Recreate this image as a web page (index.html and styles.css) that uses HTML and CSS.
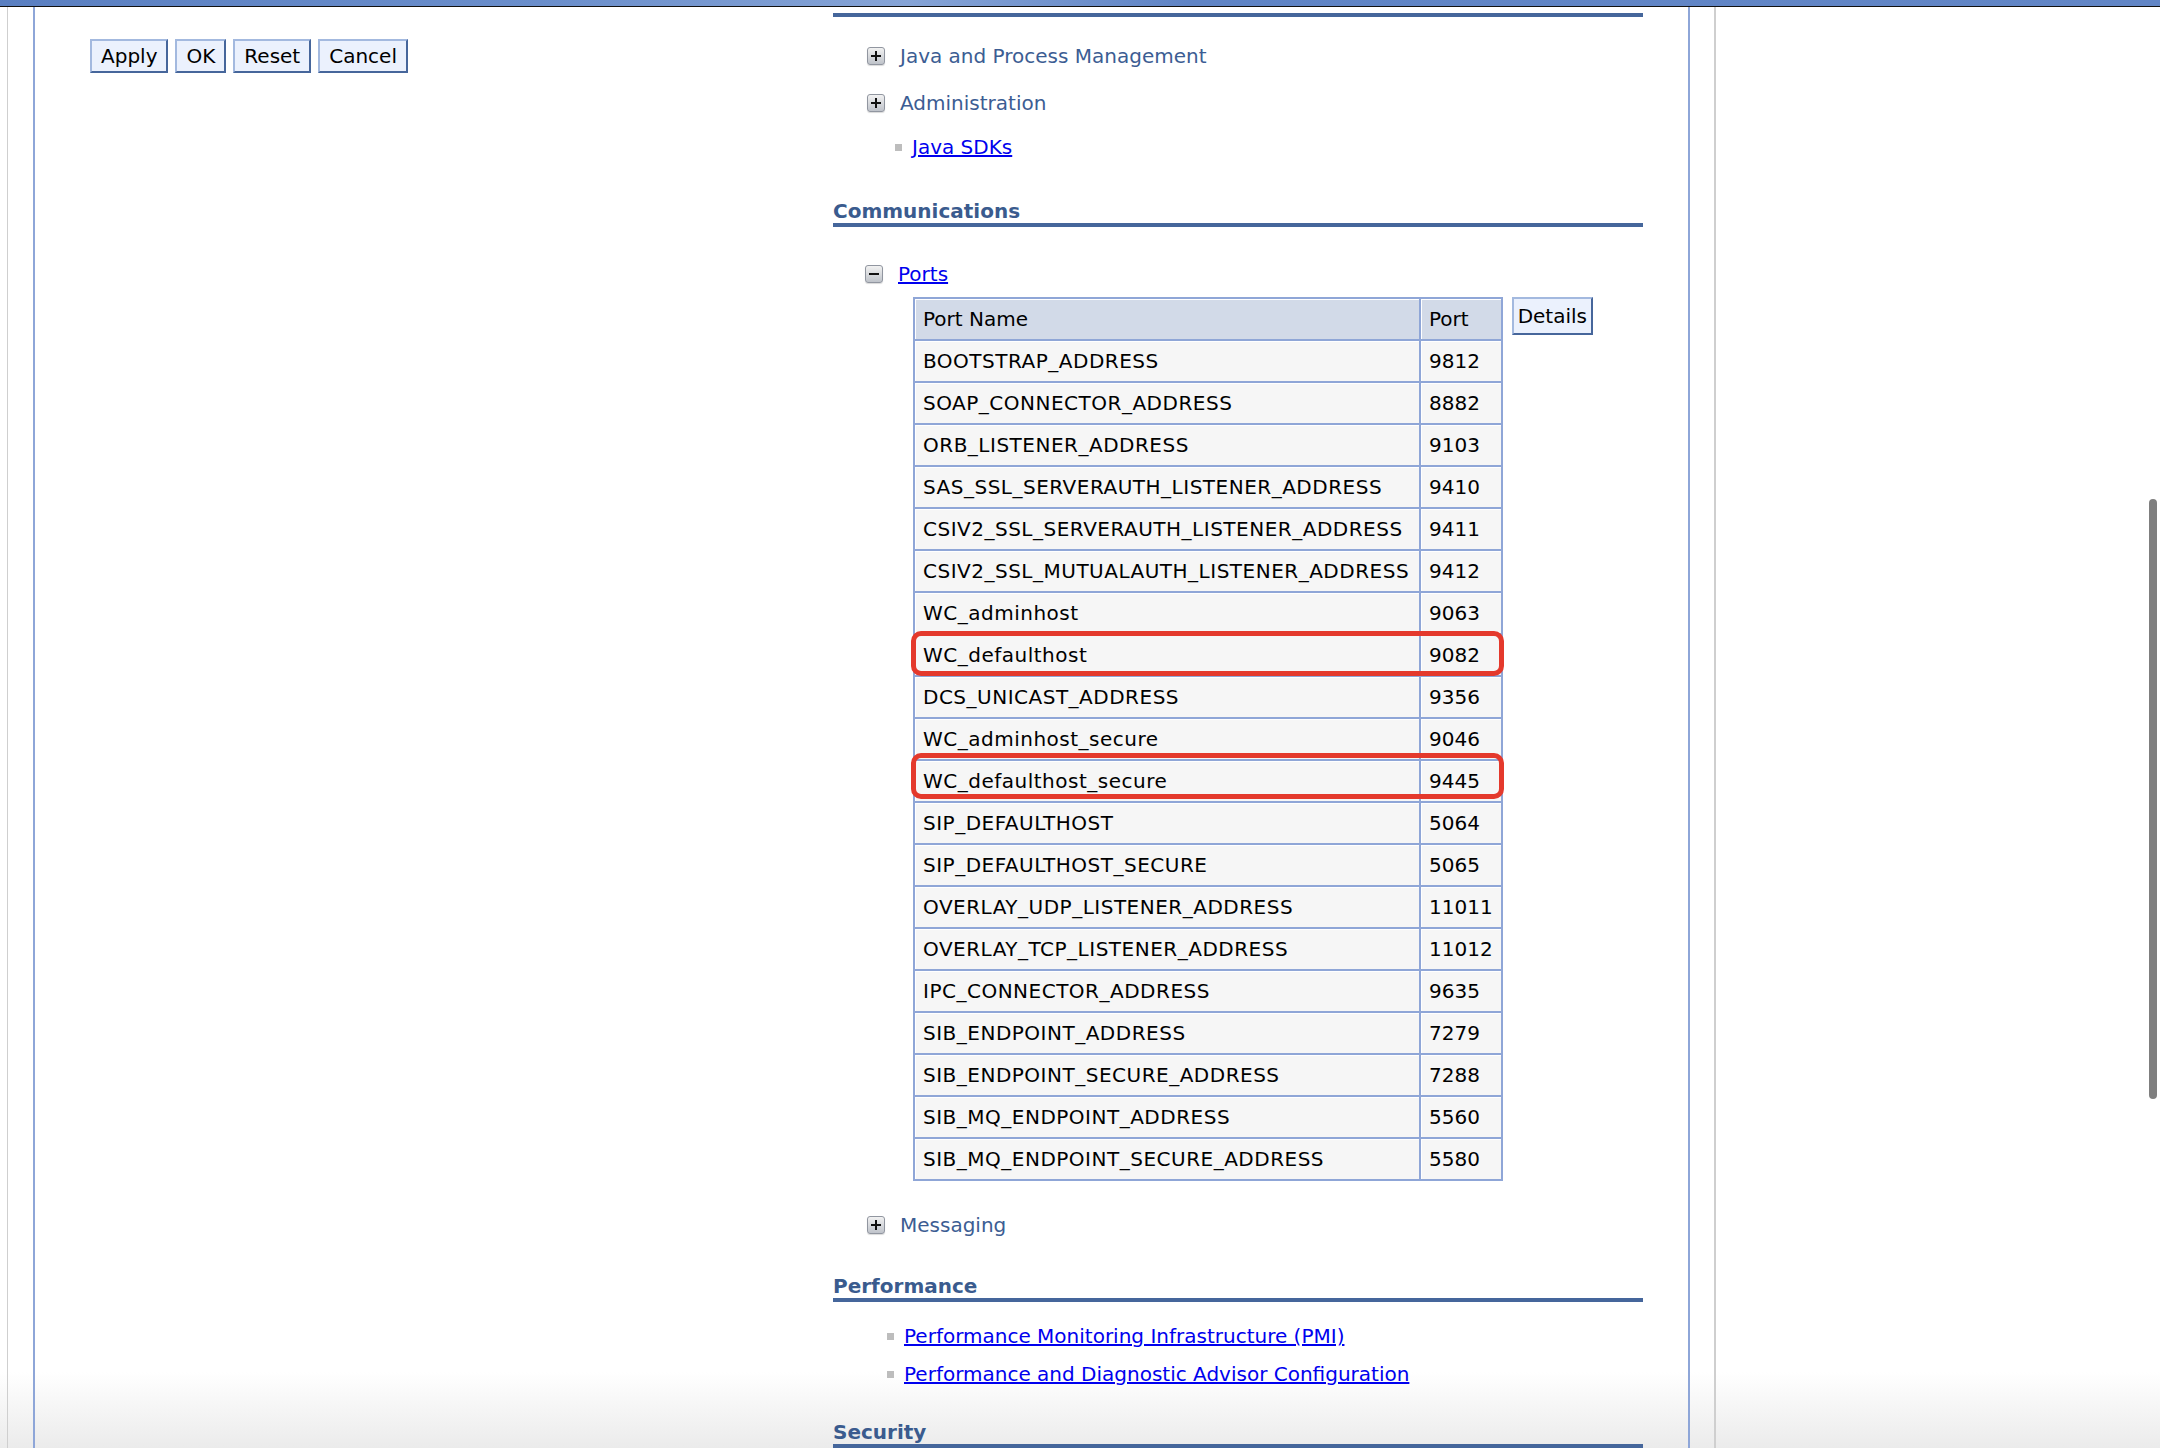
FILE: index.html
```html
<!DOCTYPE html>
<html lang="en">
<head>
<meta charset="utf-8">
<title>Application server ports</title>
<link rel="stylesheet" href="styles.css">
</head>
<body>
<div class="topbar"></div>
<div class="outer">
  <div class="inner">
    <div class="lcol">
      <div class="buttons">
        <button class="btn">Apply</button>
        <button class="btn">OK</button>
        <button class="btn">Reset</button>
        <button class="btn">Cancel</button>
      </div>
    </div>
    <div class="rcol">
      <div class="toprule"></div>

      <div class="tree-item jpm"><span class="tg plus"></span><span class="tree-text">Java and Process Management</span></div>
      <div class="tree-item admin"><span class="tg plus"></span><span class="tree-text">Administration</span></div>
      <div class="sub-item sdk"><span class="bullet"></span><a href="#" class="lnk">Java SDKs</a></div>

      <h2 class="sec-head comm">Communications</h2>

      <div class="tree-item ports"><span class="tg minus"></span><a href="#" class="lnk">Ports</a></div>

      <div class="ports-wrap">
        <table class="ports-table">
          <thead>
            <tr><th class="c-name">Port Name</th><th class="c-port">Port</th></tr>
          </thead>
          <tbody>
            <tr><td>BOOTSTRAP_ADDRESS</td><td>9812</td></tr>
            <tr><td>SOAP_CONNECTOR_ADDRESS</td><td>8882</td></tr>
            <tr><td>ORB_LISTENER_ADDRESS</td><td>9103</td></tr>
            <tr><td>SAS_SSL_SERVERAUTH_LISTENER_ADDRESS</td><td>9410</td></tr>
            <tr><td>CSIV2_SSL_SERVERAUTH_LISTENER_ADDRESS</td><td>9411</td></tr>
            <tr><td>CSIV2_SSL_MUTUALAUTH_LISTENER_ADDRESS</td><td>9412</td></tr>
            <tr><td>WC_adminhost</td><td>9063</td></tr>
            <tr><td>WC_defaulthost</td><td>9082</td></tr>
            <tr><td>DCS_UNICAST_ADDRESS</td><td>9356</td></tr>
            <tr><td>WC_adminhost_secure</td><td>9046</td></tr>
            <tr><td>WC_defaulthost_secure</td><td>9445</td></tr>
            <tr><td>SIP_DEFAULTHOST</td><td>5064</td></tr>
            <tr><td>SIP_DEFAULTHOST_SECURE</td><td>5065</td></tr>
            <tr><td>OVERLAY_UDP_LISTENER_ADDRESS</td><td>11011</td></tr>
            <tr><td>OVERLAY_TCP_LISTENER_ADDRESS</td><td>11012</td></tr>
            <tr><td>IPC_CONNECTOR_ADDRESS</td><td>9635</td></tr>
            <tr><td>SIB_ENDPOINT_ADDRESS</td><td>7279</td></tr>
            <tr><td>SIB_ENDPOINT_SECURE_ADDRESS</td><td>7288</td></tr>
            <tr><td>SIB_MQ_ENDPOINT_ADDRESS</td><td>5560</td></tr>
            <tr><td>SIB_MQ_ENDPOINT_SECURE_ADDRESS</td><td>5580</td></tr>
          </tbody>
        </table>
        <button class="btn details">Details</button>
        <div class="mark mark-1"></div>
        <div class="mark mark-2"></div>
      </div>

      <div class="tree-item msg"><span class="tg plus"></span><span class="tree-text">Messaging</span></div>

      <h2 class="sec-head perf">Performance</h2>
      <div class="sub-item pmi"><span class="bullet"></span><a href="#" class="lnk">Performance Monitoring Infrastructure (PMI)</a></div>
      <div class="sub-item pda"><span class="bullet"></span><a href="#" class="lnk">Performance and Diagnostic Advisor Configuration</a></div>

      <h2 class="sec-head sec">Security</h2>
    </div>
  </div>
</div>
<div class="scrollthumb"></div>
</body>
</html>
```

FILE: styles.css
```css
html {
  background: linear-gradient(to bottom, #ffffff 0, #ffffff 1372px, #ebebeb 1448px);
  height: 100%;
}
body {
  margin: 0;
  height: 1448px;
  overflow: hidden;
  font-family: "DejaVu Sans", Verdana, sans-serif;
  font-size: 20px;
  line-height: 24px;
  color: #000;
}

.topbar {
  height: 6px;
  border-bottom: 1px solid #111;
  background: linear-gradient(to right, #5a7fc1 0, #6a8ecb 25%, #86a4d6 42%, #5f84c5 55%, #6286c6 100%);
}

.outer {
  margin-left: 7px;
  width: 1657px;
  height: calc(1448px - 7px);
  border-left: 1px solid #cfcfcf;
  border-right: 2px solid #cfcfcf;
  padding: 0 24px 0 25px;
}
.inner {
  height: 100%;
  border-left: 2px solid #8ea6d8;
  border-right: 2px solid #8ea6d8;
  display: grid;
  grid-template-columns: 798px 810px;
}

.lcol {
  padding: 32px 0 0 55px;
}
.buttons {
  display: flex;
  gap: 7px;
}
.btn {
  font-family: "DejaVu Sans", Verdana, sans-serif;
  font-size: 20px;
  line-height: 24px;
  color: #000;
  background: #ebf1fd;
  border: 2px solid;
  border-color: #a3b9df #46669b #46669b #a3b9df;
  padding: 3px 9px;
  margin: 0;
  border-radius: 0;
}

.rcol {
  padding-top: 6px;
}
.toprule {
  border-top: 4px solid #45669b;
}

.tree-item {
  display: flex;
  align-items: center;
  gap: 15px;
  padding-left: 34px;
  height: 24px;
}
.tree-text {
  color: #3c5d93;
}
.tg {
  width: 18px;
  height: 18px;
  box-sizing: border-box;
  border: 1px solid #9196a0;
  border-radius: 3px;
  background: linear-gradient(to bottom, #f2f2f2, #bfc3ca);
  box-shadow: 0 1px 1px rgba(0, 0, 0, 0.15);
  position: relative;
  flex: none;
}
.tg::before {
  content: "";
  position: absolute;
  left: 3px;
  top: 7px;
  width: 10px;
  height: 2px;
  background: #111;
}
.tg.plus::after {
  content: "";
  position: absolute;
  left: 7px;
  top: 3px;
  width: 2px;
  height: 10px;
  background: #111;
}

.jpm { margin-top: 27px; }
.admin { margin-top: 23px; }
.sub-item {
  display: flex;
  align-items: center;
  gap: 10px;
  height: 24px;
}
.sdk { margin-top: 20px; padding-left: 62px; }
.bullet {
  width: 7px;
  height: 7px;
  background: #bdbdbd;
  flex: none;
}
.lnk {
  color: #0000ee;
  text-decoration: underline;
}

.sec-head {
  margin: 0;
  font-size: 20px;
  line-height: 24px;
  font-weight: bold;
  color: #3a5b8e;
  border-bottom: 4px solid #45669b;
}
.comm { margin-top: 40px; }
.ports { margin-top: 35px; padding-left: 32px; }

.ports-wrap {
  position: relative;
  margin-top: 11px;
  margin-left: 80px;
  display: flex;
  align-items: flex-start;
  gap: 9px;
}
.ports-table {
  border-collapse: separate;
  border-spacing: 0;
  border-top: 2px solid #8fa6d7;
  border-left: 2px solid #8fa6d7;
  white-space: nowrap;
}
.ports-table th,
.ports-table td {
  border-right: 2px solid #8fa6d7;
  border-bottom: 2px solid #8fa6d7;
  padding: 8px;
  line-height: 24px;
  text-align: left;
  font-weight: normal;
  box-shadow: inset 1px 1px 0 #ffffff;
}
.ports-table th {
  background: #d2dae8;
}
.ports-table td {
  background: #f6f6f6;
}
.ports-table tbody td:first-child {
  letter-spacing: 0.5px;
}
.c-name { width: 488px; }
.c-port { width: 60px; }

.details {
  padding: 5px 4px;
  white-space: nowrap;
}

.mark {
  position: absolute;
  left: -2px;
  width: 593px;
  box-sizing: border-box;
  border: 5px solid #e4392c;
  border-radius: 10px;
  pointer-events: none;
}
.mark-1 { top: 334px; height: 45px; }
.mark-2 { top: 456px; height: 46px; }

.msg { margin-top: 32px; }
.perf { margin-top: 37px; }
.pmi { margin-top: 22px; padding-left: 54px; }
.pda { margin-top: 14px; padding-left: 54px; }
.sec { margin-top: 34px; }

.scrollthumb {
  position: absolute;
  left: 2149px;
  top: 499px;
  width: 8px;
  height: 600px;
  border-radius: 4px;
  background: #7f7f7f;
}
```
